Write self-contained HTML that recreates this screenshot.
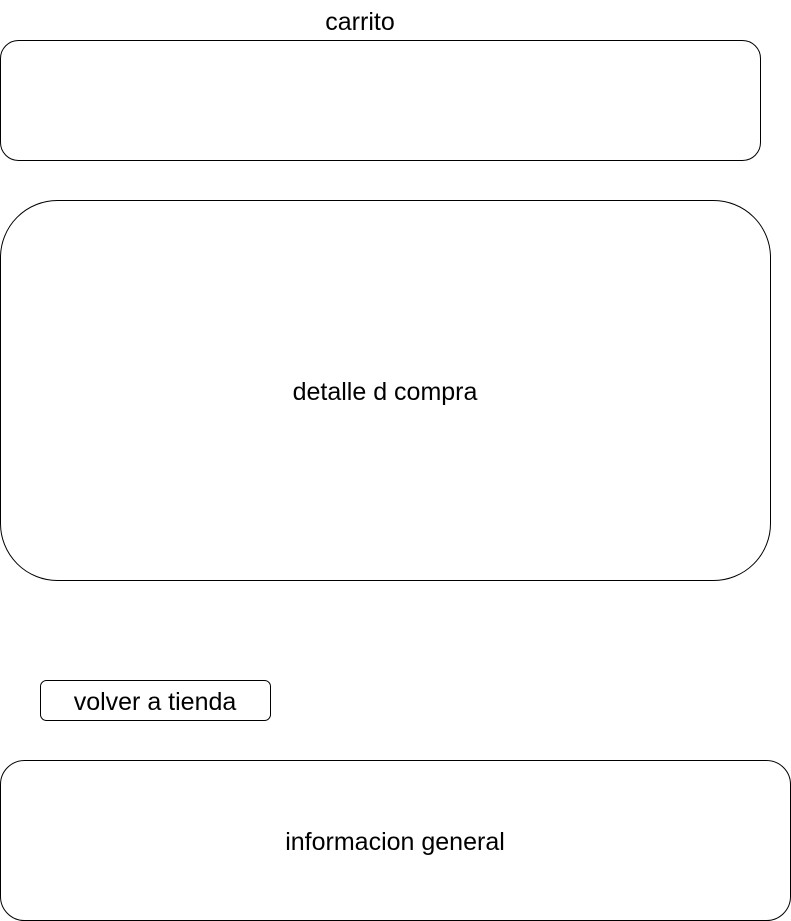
<!DOCTYPE html>
<html><head><meta charset="utf-8"><style>
html,body{margin:0;padding:0;background:#fff;width:791px;height:921px;overflow:hidden}
svg{display:block}
text{font-family:"Liberation Sans",Helvetica,Arial,sans-serif;font-size:25px;fill:#000}
</style></head><body>
<svg width="791" height="921" viewBox="0 0 791 921" xmlns="http://www.w3.org/2000/svg">
<text x="360" y="30" text-anchor="middle">carrito</text>
<rect x="0.5" y="40.5" width="760" height="120" rx="18" fill="#fff" stroke="#000"/>
<rect x="0.5" y="200.5" width="770" height="380" rx="57" fill="#fff" stroke="#000"/>
<text x="385" y="400" text-anchor="middle">detalle d compra</text>
<rect x="40.5" y="680.5" width="230" height="40" rx="6" fill="#fff" stroke="#000"/>
<text x="155" y="710" text-anchor="middle">volver a tienda</text>
<rect x="0.5" y="760.5" width="790" height="160" rx="24" fill="#fff" stroke="#000"/>
<text x="395" y="850" text-anchor="middle">informacion general</text>
</svg>
</body></html>
